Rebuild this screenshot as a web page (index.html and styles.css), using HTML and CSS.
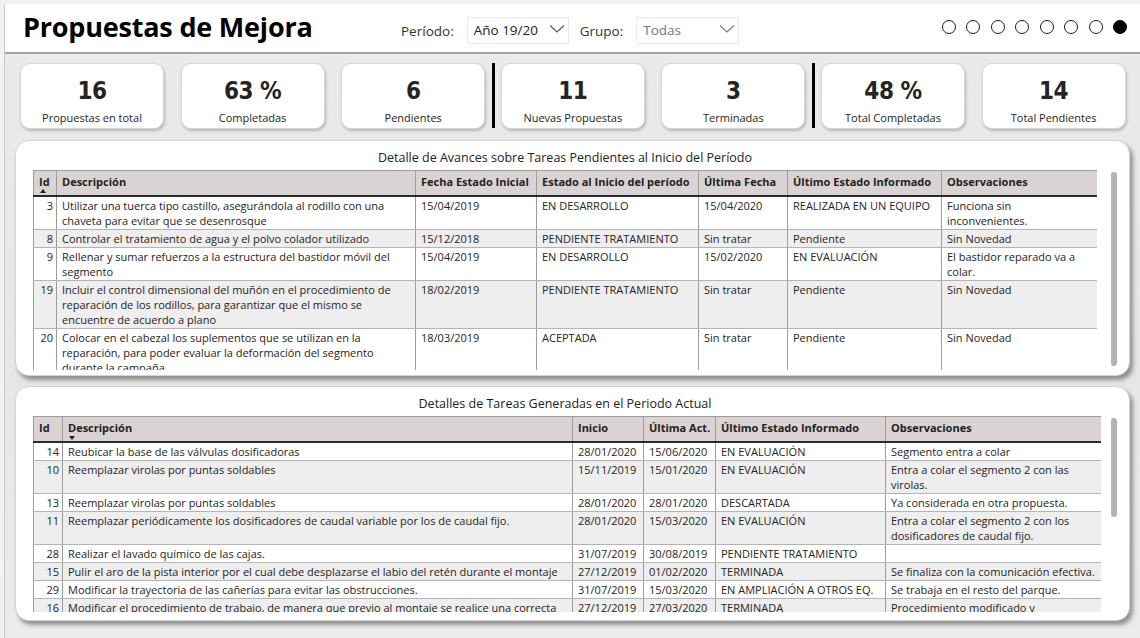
FILE: index.html
```html
<!DOCTYPE html>
<html lang="es">
<head>
<meta charset="utf-8">
<title>Propuestas de Mejora</title>
<link rel="stylesheet" href="styles.css">
</head>
<body>
<div class="app">
  <header class="topbar">
    <h1 class="title">Propuestas de Mejora</h1>
    <div class="filters">
      <span class="flabel">Período:</span>
      <div class="select"><span>Año 19/20</span><svg class="chev" viewBox="0 0 16 10" width="16" height="10"><path d="M1 1.5 L8 8 L15 1.5" fill="none" stroke="#555" stroke-width="1.1"/></svg></div>
      <span class="flabel">Grupo:</span>
      <div class="select muted"><span>Todas</span><svg class="chev" viewBox="0 0 16 10" width="16" height="10"><path d="M1 1.5 L8 8 L15 1.5" fill="none" stroke="#777" stroke-width="1.1"/></svg></div>
    </div>
    <div class="dots">
      <span class="dot"></span><span class="dot"></span><span class="dot"></span><span class="dot"></span><span class="dot"></span><span class="dot"></span><span class="dot"></span><span class="dot on"></span>
    </div>
  </header>

  <main class="content">
    <div class="kpis">
      <div class="card"><div class="num">16</div><div class="lbl">Propuestas en total</div></div>
      <div class="card"><div class="num">63 %</div><div class="lbl">Completadas</div></div>
      <div class="card"><div class="num">6</div><div class="lbl">Pendientes</div></div>
      <div class="sep"></div>
      <div class="card"><div class="num">11</div><div class="lbl">Nuevas Propuestas</div></div>
      <div class="card"><div class="num">3</div><div class="lbl">Terminadas</div></div>
      <div class="sep"></div>
      <div class="card"><div class="num">48 %</div><div class="lbl">Total Completadas</div></div>
      <div class="card last"><div class="num">14</div><div class="lbl">Total Pendientes</div></div>
    </div>

    <section class="panel">
      <div class="ptitle">Detalle de Avances sobre Tareas Pendientes al Inicio del Período</div>
      <div class="pbody">
        <div class="twrap t1">
          <table class="grid">
            <colgroup>
              <col style="width:23px"><col style="width:359px"><col style="width:121px"><col style="width:162px"><col style="width:89px"><col style="width:154px"><col style="width:156px">
            </colgroup>
            <thead>
              <tr><th>Id<div class="arrow up"></div></th><th>Descripción</th><th>Fecha Estado Inicial</th><th>Estado al Inicio del período</th><th>Última Fecha</th><th>Último Estado Informado</th><th>Observaciones</th></tr>
            </thead>
            <tbody>
              <tr><td class="id">3</td><td>Utilizar una tuerca tipo castillo, asegurándola al rodillo con una chaveta para evitar que se desenrosque</td><td>15/04/2019</td><td>EN DESARROLLO</td><td>15/04/2020</td><td>REALIZADA EN UN EQUIPO</td><td>Funciona sin inconvenientes.</td></tr>
              <tr class="alt"><td class="id">8</td><td>Controlar el tratamiento de agua y el polvo colador utilizado</td><td>15/12/2018</td><td>PENDIENTE TRATAMIENTO</td><td>Sin tratar</td><td>Pendiente</td><td>Sin Novedad</td></tr>
              <tr><td class="id">9</td><td>Rellenar y sumar refuerzos a la estructura del bastidor móvil del segmento</td><td>15/04/2019</td><td>EN DESARROLLO</td><td>15/02/2020</td><td>EN EVALUACIÓN</td><td>El bastidor reparado va a colar.</td></tr>
              <tr class="alt"><td class="id">19</td><td>Incluir el control dimensional del muñón en el procedimiento de reparación de los rodillos, para garantizar que el mismo se encuentre de acuerdo a plano</td><td>18/02/2019</td><td>PENDIENTE TRATAMIENTO</td><td>Sin tratar</td><td>Pendiente</td><td>Sin Novedad</td></tr>
              <tr><td class="id">20</td><td>Colocar en el cabezal los suplementos que se utilizan en la reparación, para poder evaluar la deformación del segmento durante la campaña</td><td>18/03/2019</td><td>ACEPTADA</td><td>Sin tratar</td><td>Pendiente</td><td>Sin Novedad</td></tr>
            </tbody>
          </table>
        </div>
        <div class="thumb th1"></div>
      </div>
    </section>

    <section class="panel">
      <div class="ptitle">Detalles de Tareas Generadas en el Periodo Actual</div>
      <div class="pbody">
        <div class="twrap t2">
          <table class="grid">
            <colgroup>
              <col style="width:29px"><col style="width:510px"><col style="width:71px"><col style="width:72px"><col style="width:170px"><col style="width:216px">
            </colgroup>
            <thead>
              <tr><th>Id</th><th>Descripción<div class="arrow down"></div></th><th>Inicio</th><th>Última Act.</th><th>Último Estado Informado</th><th>Observaciones</th></tr>
            </thead>
            <tbody>
              <tr><td class="id">14</td><td>Reubicar la base de las válvulas dosificadoras</td><td>28/01/2020</td><td>15/06/2020</td><td>EN EVALUACIÓN</td><td>Segmento entra a colar</td></tr>
              <tr class="alt"><td class="id">10</td><td>Reemplazar virolas por puntas soldables</td><td>15/11/2019</td><td>15/01/2020</td><td>EN EVALUACIÓN</td><td>Entra a colar el segmento 2 con las virolas.</td></tr>
              <tr><td class="id">13</td><td>Reemplazar virolas por puntas soldables</td><td>28/01/2020</td><td>28/01/2020</td><td>DESCARTADA</td><td>Ya considerada en otra propuesta.</td></tr>
              <tr class="alt"><td class="id">11</td><td>Reemplazar periódicamente los dosificadores de caudal variable por los de caudal fijo.</td><td>28/01/2020</td><td>15/03/2020</td><td>EN EVALUACIÓN</td><td>Entra a colar el segmento 2 con los dosificadores de caudal fijo.</td></tr>
              <tr><td class="id">28</td><td>Realizar el lavado químico de las cajas.</td><td>31/07/2019</td><td>30/08/2019</td><td>PENDIENTE TRATAMIENTO</td><td></td></tr>
              <tr class="alt"><td class="id">15</td><td>Pulir el aro de la pista interior por el cual debe desplazarse el labio del retén durante el montaje</td><td>27/12/2019</td><td>01/02/2020</td><td>TERMINADA</td><td>Se finaliza con la comunicación efectiva.</td></tr>
              <tr><td class="id">29</td><td>Modificar la trayectoria de las cañerías para evitar las obstrucciones.</td><td>31/07/2019</td><td>15/03/2020</td><td>EN AMPLIACIÓN A OTROS EQ.</td><td>Se trabaja en el resto del parque.</td></tr>
              <tr class="alt"><td class="id">16</td><td>Modificar el procedimiento de trabajo, de manera que previo al montaje se realice una correcta limpieza</td><td>27/12/2019</td><td>27/03/2020</td><td>TERMINADA</td><td>Procedimiento modificado y comunicado.</td></tr>
            </tbody>
          </table>
        </div>
        <div class="thumb th2"></div>
      </div>
    </section>
  </main>
</div>
</body>
</html>
```

FILE: styles.css
```css
* { box-sizing: border-box; }

html, body {
  margin: 0;
  padding: 0;
  width: 1140px;
  height: 638px;
  overflow: hidden;
}

body {
  background: #f1f1f1;
  font-family: "Open Sans", "Noto Sans", sans-serif;
  color: #252423;
}

.app {
  margin: 4px 0 0 4px;
  border-left: 1px solid #c9c9c9;
  height: 634px;
  display: flex;
  flex-direction: column;
  background: linear-gradient(180deg, #ebebeb 0%, #e6e6e6 60%, #ececec 100%);
}

/* ---------- top bar ---------- */
.topbar {
  height: 50px;
  flex: 0 0 50px;
  background: #fff;
  border-bottom: 2px solid #a3a3a3;
  display: flex;
  align-items: center;
  padding: 0 13px 0 18px;
}

.title {
  margin: 0;
  flex: 0 0 378px;
  font-size: 27px;
  font-weight: 700;
  color: #000;
  letter-spacing: -0.2px;
  position: relative;
  top: -2px;
}

.filters {
  display: flex;
  align-items: center;
  margin-top: 4px;
}

.flabel {
  font-size: 13.5px;
  color: #333;
  margin-right: 13px;
  margin-top: 2px;
}

.select {
  width: 102px;
  height: 27px;
  border: 1px solid #e9e9e9;
  display: flex;
  align-items: center;
  justify-content: space-between;
  padding: 0 2px 0 6px;
  font-size: 13.5px;
  color: #222;
  margin-right: 11px;
}

.select.muted { width: 103px; color: #777; }

.chev { margin-right: 1px; margin-top: -2px; }

.dots {
  margin-left: auto;
  display: flex;
  gap: 10.5px;
  margin-top: -2px;
}

.dot {
  width: 14px;
  height: 14px;
  border-radius: 50%;
  border: 1.2px solid #1a1a1a;
  background: #fff;
}

.dot.on { background: #000; border-color: #000; }

/* ---------- KPI cards ---------- */
.content {
  flex: 1;
  display: flex;
  flex-direction: column;
  padding: 9px 0 0 10px;
}

.kpis {
  display: flex;
  align-items: stretch;
  height: 66px;
  padding-left: 5px;
}

.card {
  width: 144px;
  height: 66px;
  background: #fff;
  border-radius: 10px;
  border: 1px solid #d6d6d6;
  box-shadow: 1px 2px 3px rgba(0, 0, 0, 0.22);
  margin-right: 16.6px;
  display: flex;
  flex-direction: column;
  align-items: center;
}

.card.last { margin-right: 0; }

.num {
  font-family: "DejaVu Sans Condensed", "DejaVu Sans", sans-serif;
  font-stretch: condensed;
  font-weight: 700;
  font-size: 24px;
  line-height: 28px;
  margin-top: 13px;
  color: #252423;
  letter-spacing: -0.5px;
}

.lbl {
  font-size: 11px;
  line-height: 14px;
  margin-top: 6px;
  color: #1e1e1e;
}

.sep {
  width: 3px;
  height: 65px;
  background: #000;
  margin: 0 6px 0 -10px;
}

/* ---------- panels ---------- */
.panel {
  width: 1115px;
  background: #fff;
  border-radius: 14px;
  border: 1px solid #d4d4d4;
  box-shadow: 3px 4px 4px rgba(0, 0, 0, 0.38);
  margin-top: 11px;
  padding: 8px 12px 0 17px;
  height: 236px;
}

.panel + .panel { margin-top: 10px; height: 235px; }

.ptitle {
  text-align: center;
  font-size: 12.5px;
  line-height: 18px;
  color: #222;
  padding-right: 20px;
}

.pbody {
  display: flex;
  justify-content: space-between;
  align-items: flex-start;
  margin-top: 3px;
}

.twrap {
  overflow: hidden;
}

.t1 { width: 1064px; height: 200px; }
.t2 { width: 1068px; height: 196px; }

.thumb {
  width: 6px;
  border-radius: 3px;
  background: #b3b3b3;
  margin-top: 2px;
}

.th1 { height: 194px; }
.th2 { height: 99px; }

/* ---------- tables ---------- */
.grid {
  border-collapse: collapse;
  table-layout: fixed;
  width: 100%;
  font-size: 11px;
  line-height: 15px;
  color: #252423;
}

.grid th {
  background: #d9d3d3;
  font-weight: 700;
  text-align: left;
  vertical-align: top;
  height: 25px;
  padding: 3px 5px 0 5px;
  border: 1px solid #9c9c9c;
  border-bottom: 2px solid #2b2b2b;
  white-space: nowrap;
  overflow: hidden;
  color: #222;
}

.arrow {
  width: 0;
  height: 0;
  border-left: 3.5px solid transparent;
  border-right: 3.5px solid transparent;
  margin: 0 0 0 1px;
}

.arrow.up { border-bottom: 4px solid #222; }
.arrow.down { border-top: 4px solid #222; margin-top: 1px; }

.grid td {
  vertical-align: top;
  padding: 1px 5px 1px 5px;
  border-left: 1px solid #9c9c9c;
  border-right: 1px solid #9c9c9c;
  border-bottom: 1px solid #b4b4b4;
  background: #fff;
}

.grid tr.alt td { background: #eeeeee; }

.grid td.id {
  text-align: right;
  padding-right: 3px;
  padding-left: 2px;
}
```
